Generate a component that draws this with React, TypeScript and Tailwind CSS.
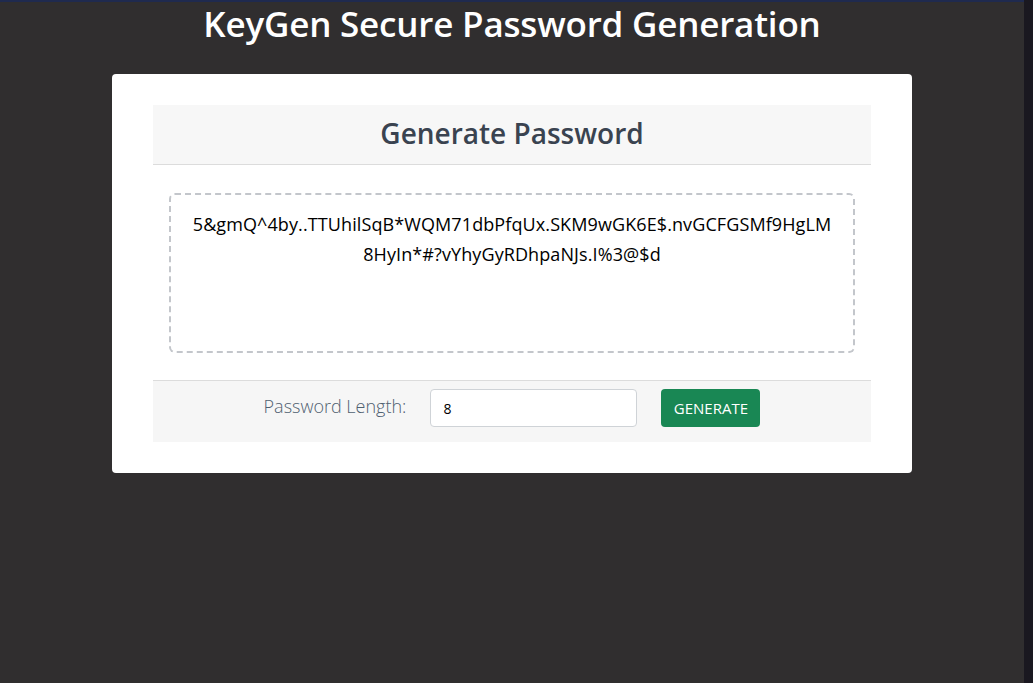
import { useState } from "react";

const line1 = "5&gmQ^4by..TTUhilSqB*WQM71dbPfqUx.SKM9wGK6E$.nvGCFGSMf9HgLM";
const line2 = "8HyIn*#?vYhyGyRDhpaNJs.I%3@$d";

export default function App() {
  const [length, setLength] = useState("8");

  return (
    <div className="flex h-screen w-full bg-[#302e2f] font-['Open_Sans','Noto_Sans',sans-serif]">
      <main className="flex-1 flex flex-col items-center border-t-2 border-[#1f2a4f]">
        <h1 className="text-[35px] leading-[44px] font-semibold text-white tracking-[-0.2px]">
          KeyGen Secure Password Generation
        </h1>

        <div className="mt-[28px] w-[800px] rounded bg-white px-[41px] py-[31px]">
          <div className="h-[60px] flex items-center justify-center bg-[#f7f7f7] border-b border-[#dcdcdc] pb-[3px]">
            <h2 className="text-[28px] font-semibold text-[#3a4350]">Generate Password</h2>
          </div>

          <div className="px-4 pt-[28px] pb-[27px]">
            <div className="h-[160px] rounded-md border-2 border-dashed border-[#c3c6cb] px-3 pt-[14px] text-center text-[18px] leading-[30px] text-black break-all tracking-[0.1px]">
              <div className="whitespace-nowrap">{line1}</div>
              <div>{line2}</div>
            </div>
          </div>

          <div className="flex items-start justify-center gap-6 bg-[#f6f6f6] border-t border-[#dcdcdc] pt-[8px] pb-[15px]">
            <label className="mt-[4px] text-[18px] font-light text-[#4f6070]">Password Length:</label>
            <input
              value={length}
              onChange={(e) => setLength(e.target.value)}
              className="h-[38px] w-[207px] rounded border border-[#cfd3d7] bg-white px-3 text-[14px] text-black outline-none"
            />
            <button className="h-[38px] w-[99px] rounded bg-[#198754] text-[15px] text-white uppercase">
              Generate
            </button>
          </div>
        </div>
      </main>
      <div className="w-[9px] h-full bg-[#1a1820]" />
    </div>
  );
}
